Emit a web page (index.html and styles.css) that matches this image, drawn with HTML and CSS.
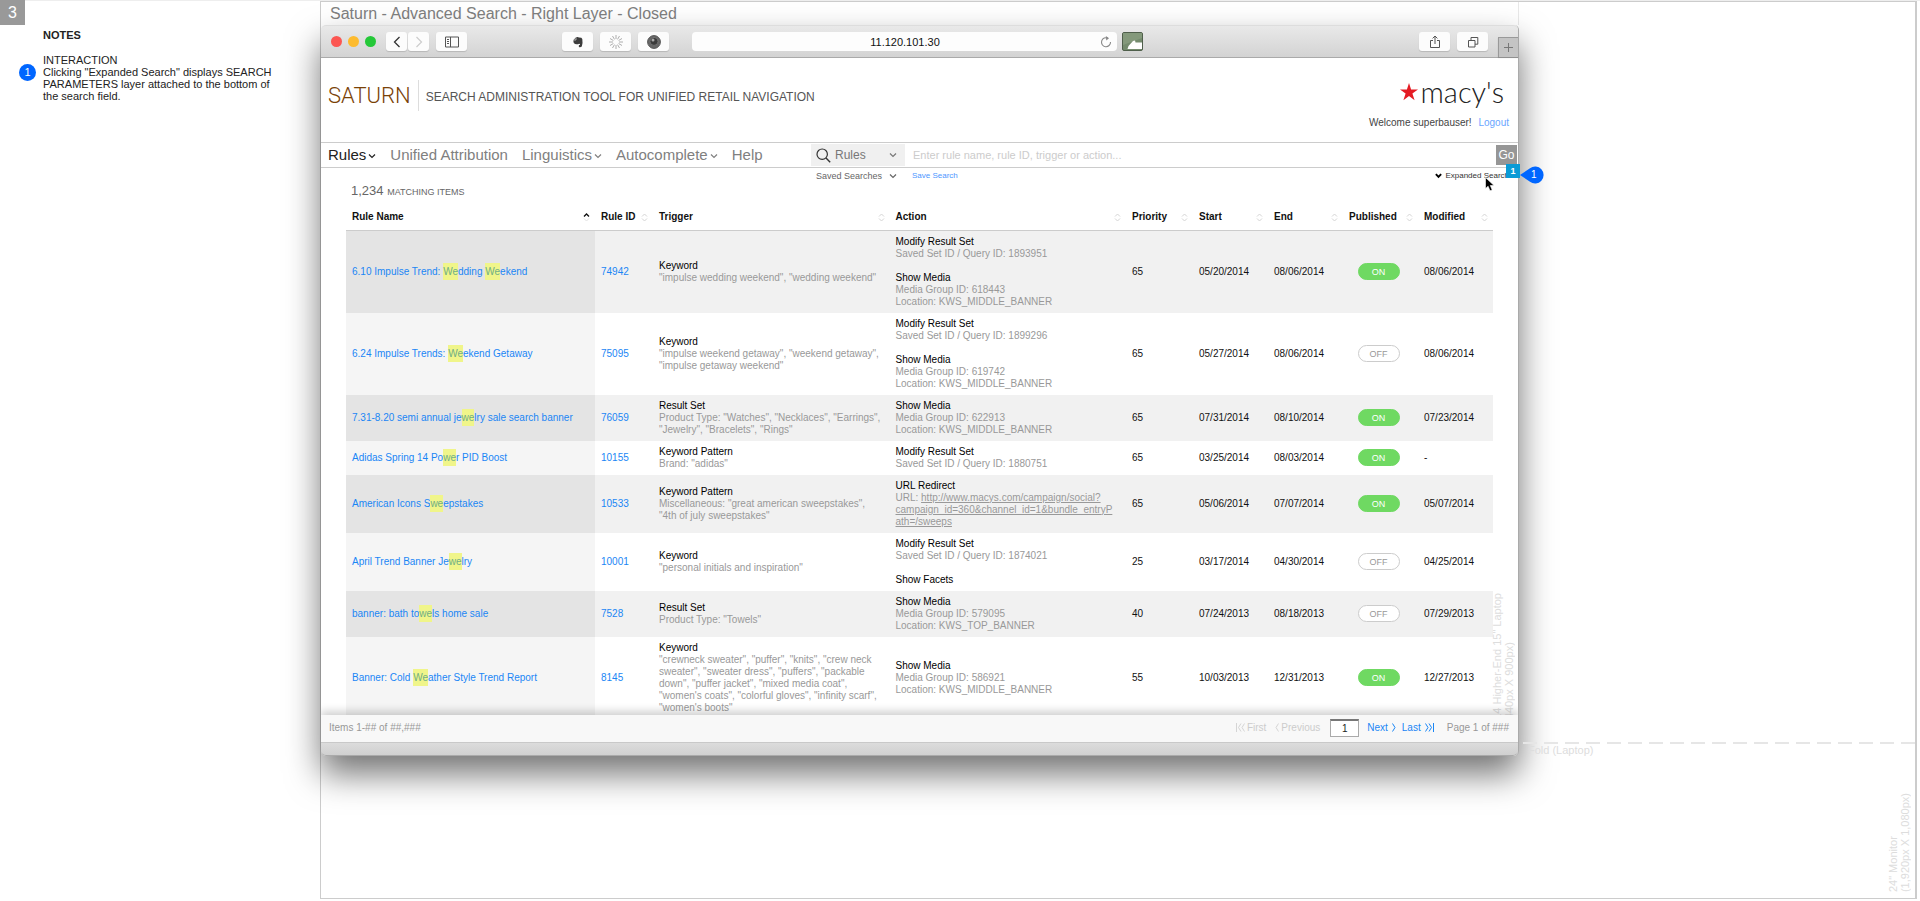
FILE: index.html
```html
<!DOCTYPE html>
<html lang="en">
<head>
    <meta charset="utf-8">
    <title>Saturn - Advanced Search</title>
    <link rel="stylesheet" href="styles.css">
</head>
<body>
<!-- Shared icons -->
<svg class="defs" width="0" height="0">
    <symbol id="chevron" viewBox="0 0 8 8"><path d="M1 2.5 L4 5.5 L7 2.5" fill="none" stroke="currentColor" stroke-width="1.2"/></symbol>
    <symbol id="sort" viewBox="0 0 7 9"><path d="M1 3.5 L3.5 1 L6 3.5 M1 5.5 L3.5 8 L6 5.5" fill="none" stroke="#d5d5d5" stroke-width="1"/></symbol>
    <symbol id="sorted" viewBox="0 0 7 9"><path d="M1 5.5 L3.5 8 L6 5.5" fill="none" stroke="#e2e2e2" stroke-width="1"/><path d="M1 3.5 L3.5 1 L6 3.5" fill="none" stroke="#111" stroke-width="1.3"/></symbol>
</svg>

<div class="page">
    <aside class="notes">
        <div class="page-number">3</div>
        <div class="notes-text">
            <h2>NOTES</h2>
            <p>INTERACTION</p>
            <p class="note"><span class="bullet">1</span>Clicking "Expanded Search" displays SEARCH PARAMETERS layer attached to the bottom of the search field.</p>
        </div>
    </aside>

    <main class="canvas">
        <h1 class="canvas-title">Saturn - Advanced Search - Right Layer - Closed</h1>

        <div class="browser">
            <div class="toolbar">
                <div class="lights"><i class="red"></i><i class="yellow"></i><i class="green"></i></div>
                <div class="nav-buttons">
                    <button aria-label="Back"><svg width="8" height="12" viewBox="0 0 8 12"><path d="M6.5 1 L1.5 6 L6.5 11" fill="none" stroke="#333" stroke-width="1.3"/></svg></button>
                    <button aria-label="Forward"><svg width="8" height="12" viewBox="0 0 8 12"><path d="M1.5 1 L6.5 6 L1.5 11" fill="none" stroke="#ccc" stroke-width="1.2"/></svg></button>
                </div>
                <button class="tool" aria-label="Sidebar"><svg width="14" height="12" viewBox="0 0 14 12"><path d="M.5 1 H13.5 V11 H.5 Z M5.5 1 V11 M2 3.5 H4 M2 5.5 H4 M2 7.5 H4" fill="none" stroke="#555" stroke-width="1"/></svg></button>
                <div class="extensions">
                    <button class="tool" aria-label="Evernote"><svg width="12" height="12" viewBox="0 0 12 12"><path d="M1.5 4 L4 1.2 Q6 .5 7 1.6 Q10 1.6 10.3 3 Q11 7 9.8 10.6 Q8 12 6.8 10.8 Q6.4 9 8 8.8 V8 Q6.6 7.6 6 8.2 Q3 8.6 1.8 7 Q1.2 5.4 1.5 4 Z" fill="#3c3c3c"/><path d="M1.5 4 H4 V1.2" fill="none" stroke="#eee" stroke-width=".6"/></svg></button>
                    <button class="tool" aria-label="Loading"><svg width="14" height="14" viewBox="0 0 14 14"><path d="M7 0 V4 M7 10 V14 M0 7 H4 M10 7 H14 M3.5 1 L5.5 4.4 M8.5 9.6 L10.5 13 M10.5 1 L8.5 4.4 M5.5 9.6 L3.5 13 M1 3.5 L4.4 5.5 M9.6 8.5 L13 10.5 M13 3.5 L9.6 5.5 M4.4 8.5 L1 10.5" stroke="#999" stroke-width=".8"/></svg></button>
                    <button class="tool" aria-label="Camera"><svg width="14" height="14" viewBox="0 0 14 14"><circle cx="7" cy="7" r="6.4" fill="#666" stroke="#555"/><circle cx="7" cy="6.4" r="4" fill="#3a3a3a" stroke="#777" stroke-width=".8"/><circle cx="6" cy="5" r="1.5" fill="#aaa"/></svg></button>
                </div>
                <div class="address">
                    <input type="text" aria-label="Address" value="11.120.101.30">
                    <svg width="12" height="12" viewBox="0 0 12 12"><path d="M8 2.2 A4.5 4.5 0 1 0 10.5 6" fill="none" stroke="#888" stroke-width="1.1"/><path d="M5.8 0 L9 2.3 L6.3 4.6 Z" fill="#888"/></svg>
                </div>
                <svg class="bookmark" width="21" height="19" viewBox="0 0 21 19"><rect x=".5" y=".5" width="20" height="18" rx="1.5" fill="#748b6d" stroke="#4f5f4b"/><path d="M1 1 H20 V6 L1 13 Z" fill="#8fa486" opacity=".6"/><path d="M5.5 17 L6.5 14 L11 9 L13 8.5 L13.5 10.5 H20 V17 Z" fill="#fff"/></svg>
                <div class="right-tools">
                    <button class="tool" aria-label="Share"><svg width="12" height="14" viewBox="0 0 12 14"><path d="M4 5.5 H1.5 V12.5 H10.5 V5.5 H8 M6 9 V1.2 M3.6 3.4 L6 1 L8.4 3.4" fill="none" stroke="#555"/></svg></button>
                    <button class="tool" aria-label="Show tabs"><svg width="12" height="12" viewBox="0 0 12 12"><path d="M1.5 4.5 H8 V11 H1.5 Z M4 4.5 V1.5 H10.8 V8.2 H8" fill="none" stroke="#555"/></svg></button>
                </div>
                <button class="new-tab" aria-label="New tab"><svg width="11" height="11" viewBox="0 0 11 11"><path d="M5.5 1 V10 M1 5.5 H10" stroke="#777"/></svg></button>
            </div>

            <header class="site-header">
                <div class="brand">SATURN</div>
                <div class="tagline">SEARCH ADMINISTRATION TOOL FOR UNIFIED RETAIL NAVIGATION</div>
                <div class="account">
                    <div class="logo"><svg width="18" height="18" viewBox="0 0 18 18"><path d="M9 0 L11.1 6.6 H18 L12.4 10.6 L14.6 17.2 L9 13.1 L3.4 17.2 L5.6 10.6 L0 6.6 H6.9 Z" fill="#e41b23"/></svg><span>macy's</span></div>
                    <div class="welcome">Welcome superbauser! <a href="#">Logout</a></div>
                </div>
            </header>

            <div class="nav-bar">
                <nav>
                    <a href="#" class="active">Rules<svg width="8" height="8"><use href="#chevron"/></svg></a>
                    <a href="#">Unified Attribution</a>
                    <a href="#">Linguistics<svg width="8" height="8"><use href="#chevron"/></svg></a>
                    <a href="#">Autocomplete<svg width="8" height="8"><use href="#chevron"/></svg></a>
                    <a href="#">Help</a>
                </nav>
                <form class="search" onsubmit="return false">
                    <label class="scope">
                        <svg width="15" height="15" viewBox="0 0 15 15"><circle cx="6.2" cy="6.2" r="5.2" fill="none" stroke="#333" stroke-width="1.2"/><path d="M10 10 L14.2 14.2" stroke="#333" stroke-width="1.4"/></svg>
                        <select aria-label="Search in"><option>Rules</option></select>
                        <svg width="8" height="8"><use href="#chevron"/></svg>
                    </label>
                    <input type="text" aria-label="Search" placeholder="Enter rule name, rule ID, trigger or action...">
                    <button>Go</button>
                </form>
            </div>
            <div class="search-extra">
                <label class="saved">
                    <select aria-label="Saved searches"><option>Saved Searches</option></select>
                    <svg width="8" height="8"><use href="#chevron"/></svg>
                </label>
                <a href="#">Save Search</a>
                <button class="expanded"><svg width="7" height="7" viewBox="0 0 8 8"><path d="M1 2.5 L4 5.5 L7 2.5" fill="none" stroke="#000" stroke-width="2.2"/></svg>Expanded Search
                    <span class="hotspot">1</span>
                    <svg class="cursor" width="10" height="15" viewBox="0 0 10 15"><path d="M.5 .5 V11.5 L3.1 9.2 L5 13.8 L7.2 12.9 L5.3 8.5 H9 Z" fill="#000" stroke="#fff" stroke-width=".6"/></svg>
                </button>
            </div>

            <section class="results">
                <p class="count">1,234 <small>MATCHING ITEMS</small></p>
                <table>
                    <colgroup>
                        <col class="c-name"><col class="c-id"><col><col><col class="c-priority"><col class="c-date"><col class="c-date"><col class="c-date"><col class="c-date">
                    </colgroup>
                    <thead>
                        <tr>
                            <th><div>Rule Name<svg width="7" height="9"><use href="#sorted"/></svg></div></th>
                            <th><div>Rule ID<svg width="7" height="9"><use href="#sort"/></svg></div></th>
                            <th><div>Trigger<svg width="7" height="9"><use href="#sort"/></svg></div></th>
                            <th><div>Action<svg width="7" height="9"><use href="#sort"/></svg></div></th>
                            <th><div>Priority<svg width="7" height="9"><use href="#sort"/></svg></div></th>
                            <th><div>Start<svg width="7" height="9"><use href="#sort"/></svg></div></th>
                            <th><div>End<svg width="7" height="9"><use href="#sort"/></svg></div></th>
                            <th><div>Published<svg width="7" height="9"><use href="#sort"/></svg></div></th>
                            <th><div>Modified<svg width="7" height="9"><use href="#sort"/></svg></div></th>
                        </tr>
                    </thead>
                    <tbody>
                        <tr>
                            <td><a href="#">6.10 Impulse Trend: <mark>We</mark>dding <mark>We</mark>ekend</a></td>
                            <td><a href="#">74942</a></td>
                            <td><b>Keyword</b>"impulse wedding weekend", "wedding weekend"</td>
                            <td><b>Modify Result Set</b>Saved Set ID / Query ID: 1893951<b class="next">Show Media</b>Media Group ID: 618443<br>Location: KWS_MIDDLE_BANNER</td>
                            <td>65</td>
                            <td>05/20/2014</td>
                            <td>08/06/2014</td>
                            <td><button class="toggle on">ON</button></td>
                            <td>08/06/2014</td>
                        </tr>
                        <tr>
                            <td><a href="#">6.24 Impulse Trends: <mark>We</mark>ekend Getaway</a></td>
                            <td><a href="#">75095</a></td>
                            <td><b>Keyword</b>"impulse weekend getaway", "weekend getaway", "impulse getaway weekend"</td>
                            <td><b>Modify Result Set</b>Saved Set ID / Query ID: 1899296<b class="next">Show Media</b>Media Group ID: 619742<br>Location: KWS_MIDDLE_BANNER</td>
                            <td>65</td>
                            <td>05/27/2014</td>
                            <td>08/06/2014</td>
                            <td><button class="toggle">OFF</button></td>
                            <td>08/06/2014</td>
                        </tr>
                        <tr>
                            <td><a href="#">7.31-8.20 semi annual je<mark>we</mark>lry sale search banner</a></td>
                            <td><a href="#">76059</a></td>
                            <td><b>Result Set</b>Product Type: "Watches", "Necklaces", "Earrings", "Jewelry", "Bracelets", "Rings"</td>
                            <td><b>Show Media</b>Media Group ID: 622913<br>Location: KWS_MIDDLE_BANNER</td>
                            <td>65</td>
                            <td>07/31/2014</td>
                            <td>08/10/2014</td>
                            <td><button class="toggle on">ON</button></td>
                            <td>07/23/2014</td>
                        </tr>
                        <tr>
                            <td><a href="#">Adidas Spring 14 Po<mark>we</mark>r PID Boost</a></td>
                            <td><a href="#">10155</a></td>
                            <td><b>Keyword Pattern</b>Brand: "adidas"</td>
                            <td><b>Modify Result Set</b>Saved Set ID / Query ID: 1880751</td>
                            <td>65</td>
                            <td>03/25/2014</td>
                            <td>08/03/2014</td>
                            <td><button class="toggle on">ON</button></td>
                            <td>-</td>
                        </tr>
                        <tr>
                            <td><a href="#">American Icons S<mark>we</mark>epstakes</a></td>
                            <td><a href="#">10533</a></td>
                            <td><b>Keyword Pattern</b>Miscellaneous: "great american sweepstakes", "4th of july sweepstakes"</td>
                            <td><b>URL Redirect</b>URL: <a class="url" href="#">http://www.macys.com/campaign/social?<wbr>campaign_id=360&amp;channel_id=1&amp;bundle_entryP<wbr>ath=/sweeps</a></td>
                            <td>65</td>
                            <td>05/06/2014</td>
                            <td>07/07/2014</td>
                            <td><button class="toggle on">ON</button></td>
                            <td>05/07/2014</td>
                        </tr>
                        <tr>
                            <td><a href="#">April Trend Banner Je<mark>we</mark>lry</a></td>
                            <td><a href="#">10001</a></td>
                            <td><b>Keyword</b>"personal initials and inspiration"</td>
                            <td><b>Modify Result Set</b>Saved Set ID / Query ID: 1874021<b class="next">Show Facets</b></td>
                            <td>25</td>
                            <td>03/17/2014</td>
                            <td>04/30/2014</td>
                            <td><button class="toggle">OFF</button></td>
                            <td>04/25/2014</td>
                        </tr>
                        <tr>
                            <td><a href="#">banner: bath to<mark>we</mark>ls home sale</a></td>
                            <td><a href="#">7528</a></td>
                            <td><b>Result Set</b>Product Type: "Towels"</td>
                            <td><b>Show Media</b>Media Group ID: 579095<br>Location: KWS_TOP_BANNER</td>
                            <td>40</td>
                            <td>07/24/2013</td>
                            <td>08/18/2013</td>
                            <td><button class="toggle">OFF</button></td>
                            <td>07/29/2013</td>
                        </tr>
                        <tr>
                            <td><a href="#">Banner: Cold <mark>We</mark>ather Style Trend Report</a></td>
                            <td><a href="#">8145</a></td>
                            <td><b>Keyword</b>"crewneck sweater", "puffer", "knits", "crew neck sweater", "sweater dress", "puffers", "packable down", "puffer jacket", "mixed media coat", "women's coats", "colorful gloves", "infinity scarf", "women's boots"</td>
                            <td><b>Show Media</b>Media Group ID: 586921<br>Location: KWS_MIDDLE_BANNER</td>
                            <td>55</td>
                            <td>10/03/2013</td>
                            <td>12/31/2013</td>
                            <td><button class="toggle on">ON</button></td>
                            <td>12/27/2013</td>
                        </tr>
                    </tbody>
                </table>
                <div class="size-label laptop">2014 Higher-End 15" Laptop<br>(1,440px X 900px)</div>
            </section>

            <footer class="pager">
                <span class="range">Items 1-## of ##,###</span>
                <span class="disabled"><svg width="9" height="9" viewBox="0 0 9 9"><path d="M.5 0 V9 M5 .5 L2.5 4.5 L5 8.5 M8.5 .5 L6 4.5 L8.5 8.5" fill="none" stroke="currentColor" stroke-width=".8"/></svg>First</span>
                <span class="disabled"><svg width="4" height="9" viewBox="0 0 4 9"><path d="M3.5 .5 L1 4.5 L3.5 8.5" fill="none" stroke="currentColor" stroke-width=".8"/></svg>Previous</span>
                <input type="text" aria-label="Page" value="1">
                <a href="#">Next<svg width="4" height="9" viewBox="0 0 4 9"><path d="M.5 .5 L3 4.5 L.5 8.5" fill="none" stroke="currentColor"/></svg></a>
                <a href="#">Last<svg width="9" height="9" viewBox="0 0 9 9"><path d="M8.5 0 V9 M.5 .5 L3 4.5 L.5 8.5 M4 .5 L6.5 4.5 L4 8.5" fill="none" stroke="currentColor"/></svg></a>
                <span>Page 1 of ###</span>
            </footer>
            <div class="window-bottom"></div>
        </div>

        <div class="gutter">
            <div class="callout"><svg width="24" height="18" viewBox="0 0 24 18"><path d="M0 9 L10 2.2 A8.5 8.5 0 1 1 10 15.8 Z" fill="#0066ff"/></svg><span>1</span></div>
            <div class="fold">Fold (Laptop)</div>
        </div>
        <div class="size-label monitor">24" Monitor<br>(1,920px X 1,080px)</div>
    </main>
</div>
</body>
</html>
```
FILE: styles.css
```css
* {
    box-sizing: border-box;
}

body {
    margin: 0;
    background-color: #fff;
    font-family: "Liberation Sans", Arial, sans-serif;
    font-size: 10px;
    line-height: 12px;
    color: #222;
}

h1, h2, p {
    margin: 0;
    font-weight: normal;
}

a {
    color: #1a86f5;
    text-decoration: none;
}

button, input, select {
    font-family: inherit;
    font-size: inherit;
    color: inherit;
    border: 0;
    padding: 0;
    margin: 0;
    background: none;
    border-radius: 0;
}

select {
    appearance: none;
}

.defs {
    position: absolute;
}

.page {
    display: grid;
    grid-template-columns: 320px minmax(0, 1fr);
    min-height: 100vh;
    padding: 0 3px 2px 0;
    border-top: 1px solid #eee;
}

/* Notes column */
.notes {
    margin-top: -1px;
}

.page-number {
    width: 25px;
    height: 25px;
    background-color: #999;
    color: #fff;
    font-size: 16px;
    line-height: 26px;
    text-align: center;
}

.notes-text {
    padding: 4px 40px 0 43px;
    font-size: 11px;
}

.notes-text h2 {
    font-size: 11px;
    font-weight: bold;
    line-height: 13px;
    margin-bottom: 12px;
}

.notes-text p {
    line-height: 12px;
}

.note {
    position: relative;
}

.bullet {
    position: absolute;
    left: -24px;
    top: -2px;
    width: 17px;
    height: 17px;
    border-radius: 50%;
    background-color: #06f;
    color: #fff;
    line-height: 17px;
    text-align: center;
}

/* Design canvas */
.canvas {
    display: grid;
    grid-template-columns: minmax(0, 1fr) 396px;
    grid-template-rows: 23px auto 1fr;
    border: 1px solid #ccc;
    border-right-width: 2px;
}

.canvas-title {
    grid-column: 1;
    padding-left: 9px;
    font-size: 16px;
    line-height: 24px;
    color: #808080;
    border-right: 1px solid #e8e8e8;
}

.browser {
    grid-row: 2;
    border-radius: 5px;
    background-color: #fff;
    border-right: 1px solid #aaa;
    box-shadow: 0 18px 34px rgba(0, 0, 0, 0.55);
}

.toolbar {
    display: flex;
    align-items: center;
    height: 33px;
    padding-left: 10px;
    background-image: linear-gradient(#e9e9e9, #d3d3d3);
    border-top: 1px solid #ddd;
    border-bottom: 1px solid #aaa;
    border-radius: 5px 5px 0 0;
}

.toolbar button {
    display: flex;
    align-items: center;
    justify-content: center;
    height: 19px;
    background-color: #fcfcfc;
    border-radius: 3px;
    box-shadow: 0 1px 1px rgba(0, 0, 0, 0.15);
}

.lights {
    display: flex;
    gap: 6px;
}

.lights i {
    width: 11px;
    height: 11px;
    border-radius: 50%;
}

.red { background-color: #fc5652; }
.yellow { background-color: #fdbb2e; }
.green { background-color: #24c838; }

.nav-buttons {
    display: flex;
    gap: 1px;
    margin: 0 7px 0 10px;
}

.nav-buttons button {
    width: 21px;
}

.toolbar .tool {
    width: 31px;
}

.extensions {
    display: flex;
    gap: 7px;
    margin: 0 23px 0 95px;
}

.address {
    flex: 1;
    display: flex;
    align-items: center;
    height: 19px;
    padding: 0 5px 0 18px;
    background-color: #fdfdfd;
    border-radius: 4px;
}

.address input {
    flex: 1;
    min-width: 0;
    text-align: center;
    font-size: 11px;
    color: #111;
}

.bookmark {
    margin-left: 5px;
}

.right-tools {
    display: flex;
    gap: 7px;
    margin: 0 10px 0 276px;
}

.toolbar .new-tab {
    align-self: flex-end;
    width: 20px;
    height: 20px;
    background-color: #c4c4c4;
    border: 1px solid #999;
    border-width: 1px 0 0 1px;
    border-radius: 0;
}

/* Header */
.site-header {
    display: flex;
    align-items: flex-start;
    height: 85px;
    padding: 22px 9px 0 7px;
    border-bottom: 1px solid #ccc;
}

.brand {
    padding-right: 7px;
    border-right: 1px solid #ddd;
    font-family: Roboto, sans-serif;
    font-size: 22px;
    font-weight: 300;
    line-height: 31px;
    color: #7a4206;
}

.tagline {
    padding-left: 7px;
    font-size: 12px;
    line-height: 34px;
    color: #555;
}

.account {
    margin-left: auto;
    text-align: right;
}

.logo {
    display: flex;
    align-items: center;
    justify-content: flex-end;
    gap: 3px;
    height: 24px;
    padding-right: 5px;
}

.logo span {
    font-family: Lato, sans-serif;
    font-size: 29px;
    font-weight: 300;
    line-height: 24px;
    color: #222;
}

.welcome {
    padding-top: 13px;
    color: #444;
}

.welcome a {
    margin-left: 4px;
    color: #6aa6ff;
}

/* Navigation and search */
.nav-bar {
    display: flex;
    height: 25px;
    border-bottom: 1px solid #ccc;
}

nav {
    display: flex;
    width: 490px;
    padding-left: 7px;
    gap: 14px;
    font-size: 15px;
    line-height: 24px;
    white-space: nowrap;
}

nav a {
    color: #808080;
}

nav a.active {
    color: #222;
}

nav svg {
    margin-left: 2px;
}

.search {
    flex: 1;
    display: flex;
    align-items: center;
    padding-right: 1px;
}

.scope {
    display: flex;
    align-items: center;
    width: 94px;
    height: 22px;
    padding: 0 8px 0 5px;
    gap: 4px;
    background-color: #f0f0f0;
    color: #777;
}

.scope select, .saved select {
    flex: 1;
    min-width: 0;
}

.scope select {
    font-size: 12px;
}

.search input {
    flex: 1;
    padding-left: 8px;
    font-size: 11px;
}

.search input::placeholder {
    color: #ccc;
}

.search button {
    width: 21px;
    height: 20px;
    background-color: #969696;
    color: #fff;
    font-size: 12px;
}

.search-extra {
    display: flex;
    align-items: center;
    height: 15px;
    padding: 0 9px 0 495px;
    font-size: 8px;
}

.saved {
    display: flex;
    align-items: center;
    width: 81px;
    margin-right: 15px;
    color: #666;
    font-size: 9px;
}

.search-extra a {
    color: #4d97ff;
}

.expanded {
    position: relative;
    display: flex;
    align-items: center;
    gap: 3px;
    margin-left: auto;
    color: #333;
}

.hotspot {
    position: absolute;
    right: -11px;
    top: -7px;
    width: 14px;
    height: 14px;
    background-color: #0a9bd6;
    color: #fff;
    font-size: 9px;
    font-weight: bold;
    line-height: 14px;
}

.cursor {
    position: absolute;
    right: 14px;
    top: 6px;
}

/* Results */
.results {
    position: relative;
    padding: 0 25px;
    margin-bottom: -4px;
    overflow: hidden;
}

.count {
    padding: 0 5px;
    font-size: 13px;
    line-height: 15px;
    color: #666;
}

.count small {
    font-size: 9px;
}

table {
    width: 100%;
    margin-top: 5px;
    table-layout: fixed;
    border-collapse: collapse;
}

.c-name { width: 249px; }
.c-id { width: 58px; }
.c-priority { width: 67px; }
.c-date { width: 75px; }

th {
    height: 25px;
    padding: 0 5px 0 6px;
    border-bottom: 1px solid #ccc;
    text-align: left;
    color: #111;
}

th div {
    display: flex;
    align-items: center;
    justify-content: space-between;
}

td {
    padding: 5px 0 5px 6px;
    vertical-align: middle;
    color: #111;
}

td:nth-child(3), td:nth-child(4) {
    color: #999;
}

td:nth-child(3) {
    padding-right: 6px;
}

td b {
    display: block;
    font-weight: normal;
    color: #000;
}

td .next {
    margin-top: 12px;
}

td .url {
    color: #999;
    text-decoration: underline;
}

tbody tr:nth-child(odd) { background-color: #f1f1f1; }
tbody td:first-child { background-color: #f5f5f5; }
tbody tr:nth-child(odd) td:first-child { background-color: #e4e4e4; }

td:nth-child(8) {
    padding: 0 4px 0 0;
    text-align: center;
}

mark {
    padding: 3px 0;
    background-color: #f0f58a;
    color: #6fae85;
}

.toggle {
    width: 42px;
    height: 17px;
    border: 1px solid #ccc;
    border-radius: 9px;
    background-color: #fff;
    color: #999;
    font-size: 9px;
    vertical-align: middle;
}

.toggle.on {
    background-color: #6fd962;
    border-color: #6fd962;
    color: #fff;
}

/* Screen size labels, read bottom to top */
.size-label {
    writing-mode: vertical-rl;
    transform: rotate(180deg);
    font-size: 11px;
    white-space: nowrap;
    color: #ddd;
}

.laptop {
    position: absolute;
    right: 3px;
    bottom: -14px;
}

.monitor {
    grid-row: 3;
    grid-column: 2;
    justify-self: end;
    align-self: end;
    margin: 0 4px 6px 0;
}

/* Pager */
.pager {
    position: relative;
    display: flex;
    align-items: center;
    gap: 7px;
    height: 28px;
    padding: 0 9px 0 8px;
    background-color: #f8f8f8;
    border-bottom: 1px solid #999;
    box-shadow: 0 -4px 8px rgba(0, 0, 0, 0.18);
    clip-path: inset(-12px 0 0 0);
    color: #999;
}

.pager .range {
    margin-right: auto;
}

.pager .disabled {
    color: #ccc;
}

.pager svg {
    margin: 0 2px;
    vertical-align: -1px;
}

.pager a svg {
    margin: 0 0 0 4px;
}

.pager input {
    width: 29px;
    height: 18px;
    margin: 0 1px 0 3px;
    border: 1px solid #aaa;
    border-top: 2px solid #777;
    background-color: #fff;
    color: #222;
    text-align: center;
}

.pager a + span {
    margin-left: 6px;
}

.pager a + a {
    margin-left: -1px;
}

.window-bottom {
    height: 13px;
    background-image: linear-gradient(#dcdcdc, #d0d0d0);
    border-bottom: 1px solid #aaa;
    border-radius: 0 0 5px 5px;
}

/* Space right of the laptop window */
.gutter {
    grid-row: 2;
    grid-column: 2;
    display: flex;
    flex-direction: column;
    justify-content: space-between;
    z-index: 1;
}

.callout {
    position: relative;
    width: 24px;
    height: 18px;
    margin: 141px 0 0 1px;
}

.callout span {
    position: absolute;
    left: 11px;
    top: 3px;
    color: #fff;
}

.fold {
    margin-left: 4px;
    padding: 2px 0 0 5px;
    font-size: 11px;
    color: #ddd;
    background-image: repeating-linear-gradient(90deg, #e6e6e6 0, #e6e6e6 14px, transparent 14px, transparent 21px);
    background-size: 100% 2px;
    background-repeat: no-repeat;
}
```
